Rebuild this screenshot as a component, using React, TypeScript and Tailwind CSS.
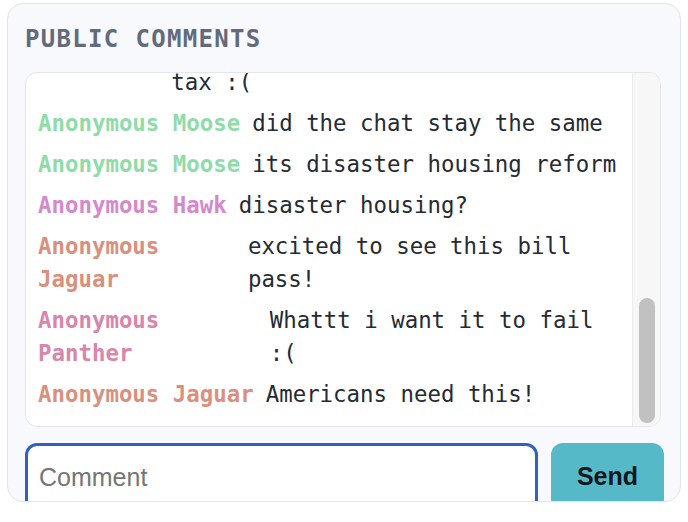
import React from "react";

interface Comment {
  id: number;
  name: string;
  color: string;
  text: string;
}

const comments: Comment[] = [
  {
    id: 1,
    name: "Anonymous Owl",
    color: "text-[#8fd3e0]",
    text: "this bill looks fine but i'm worried this will raise my income tax :(",
  },
  { id: 2, name: "Anonymous Moose", color: "text-[#8fdcaa]", text: "did the chat stay the same" },
  { id: 3, name: "Anonymous Moose", color: "text-[#8fdcaa]", text: "its disaster housing reform" },
  { id: 4, name: "Anonymous Hawk", color: "text-[#d688cc]", text: "disaster housing?" },
  { id: 5, name: "Anonymous Jaguar", color: "text-[#d9907e]", text: "excited to see this bill pass!" },
  { id: 6, name: "Anonymous Panther", color: "text-[#d886ac]", text: "Whattt i want it to fail :(" },
  { id: 7, name: "Anonymous Jaguar", color: "text-[#d9907e]", text: "Americans need this!" },
];

function CommentRow({ comment }: { comment: Comment }) {
  return (
    <div className="flex gap-3 leading-[33px]">
      <span className={`font-bold ${comment.color}`}>{comment.name}</span>
      <span className="text-[#262a33]">{comment.text}</span>
    </div>
  );
}

export default function App() {
  return (
    <div className="min-h-screen bg-white pt-[3px] pl-[7px]">
      <div className="flex h-[499px] w-[674px] flex-col overflow-hidden rounded-2xl border border-[#e2e5ea] bg-[#f8f9fc] pt-[19px] pl-[17px] pr-[16px]">
        <h2
          className="shrink-0 text-[24px] leading-[32px] font-bold tracking-[0.055em] text-[#626a7b]"
          style={{ fontFamily: '"DejaVu Sans Mono", monospace' }}
        >
          PUBLIC COMMENTS
        </h2>

        <div className="mt-[17px] mr-[3px] flex h-[355px] shrink-0 overflow-hidden rounded-xl border border-[#e2e5ea] bg-white">
          <div
            className="flex flex-1 flex-col justify-end overflow-hidden pl-3 pr-[13px] pb-[15px] text-[22.4px]"
            style={{ fontFamily: '"DejaVu Sans Mono", monospace' }}
          >
            <div className="flex flex-col gap-2">
              {comments.map((c) => (
                <CommentRow key={c.id} comment={c} />
              ))}
            </div>
          </div>
          <div className="w-[28px] shrink-0 border-l border-[#ececec] bg-[#f7f7f7] pt-[225px]">
            <div className="mx-auto h-[125px] w-[16px] rounded-full bg-[#c1c1c1]" />
          </div>
        </div>

        <div
          className="mt-4 flex h-[68px] shrink-0 gap-[13px]"
          style={{ fontFamily: '"Liberation Sans", Arial, sans-serif' }}
        >
          <input
            type="text"
            placeholder="Comment"
            className="h-full w-[513px] shrink-0 rounded-xl border-[3px] border-[#3060c0] bg-white pl-[11px] text-[25px] text-[#111827] outline-none placeholder:text-[#757575]"
          />
          <button className="h-full w-[113px] shrink-0 rounded-xl bg-[#56b9c7] text-[25px] font-bold text-[#0f1720]">
            Send
          </button>
        </div>
      </div>
    </div>
  );
}
